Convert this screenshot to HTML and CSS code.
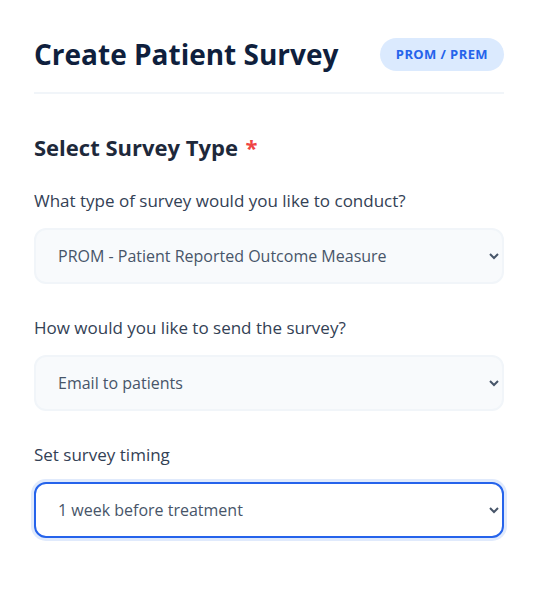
FILE: index.html
```html
<!DOCTYPE html>
<html lang="en">
<head>
<meta charset="utf-8">
<title>Create Patient Survey</title>
<link rel="stylesheet" href="styles.css">
</head>
<body>
<main class="card">
  <header class="header">
    <h1 class="title">Create Patient Survey</h1>
    <span class="badge">PROM / PREM</span>
  </header>
  <section class="section">
    <h2 class="section-title">Select Survey Type <span class="req">*</span></h2>
    <div class="field">
      <label class="label" for="type">What type of survey would you like to conduct?</label>
      <select class="select" id="type">
        <option>PROM - Patient Reported Outcome Measure</option>
        <option>PREM - Patient Reported Experience Measure</option>
      </select>
    </div>
    <div class="field">
      <label class="label" for="send">How would you like to send the survey?</label>
      <select class="select" id="send">
        <option>Email to patients</option>
        <option>SMS to patients</option>
      </select>
    </div>
    <div class="field">
      <label class="label" for="timing">Set survey timing</label>
      <select class="select select-focus" id="timing">
        <option>1 week before treatment</option>
        <option>1 week after treatment</option>
      </select>
    </div>
  </section>
</main>
</body>
</html>
```

FILE: styles.css
```css
* { box-sizing: border-box; }
html, body { margin: 0; background: #ffffff; }
body {
  font-family: "Open Sans", "Noto Sans", sans-serif;
  color: #1e293b;
}
.card {
  padding: 32px 36px 32px 34px;
}
.header {
  display: flex;
  align-items: center;
  justify-content: space-between;
  padding-bottom: 16px;
  border-bottom: 2px solid #f1f5f9;
}
.title {
  margin: 0;
  font-size: 28px;
  font-weight: 700;
  line-height: 44px;
  color: #0f1f3d;
}
.badge {
  display: inline-flex;
  align-items: center;
  height: 33px;
  padding: 0 16px;
  border-radius: 17px;
  background: #dbeafe;
  color: #2563eb;
  font-size: 13px;
  font-weight: 700;
  letter-spacing: 0.4px;
}
.section {
  padding-top: 38px;
}
.section-title {
  margin: 0 0 26px;
  font-size: 22px;
  font-weight: 700;
  line-height: 30px;
  color: #1e293b;
}
.req { color: #ef4444; margin-left: 2px; }
.field { margin-bottom: 31px; }
.label {
  display: block;
  font-size: 17px;
  line-height: 26px;
  color: #334155;
  margin-bottom: 14px;
}
.select {
  display: block;
  width: 100%;
  height: 56px;
  padding: 0 6px 0 18px;
  font-family: "Open Sans", "Noto Sans", sans-serif;
  font-size: 16px;
  color: #475569;
  background: #f8fafc;
  border: 2px solid #f1f5f9;
  border-radius: 12px;
  outline: none;
}
.select-focus {
  background: #ffffff;
  border-color: #2563eb;
  box-shadow: 0 0 0 3px #e0eafc;
}
```
